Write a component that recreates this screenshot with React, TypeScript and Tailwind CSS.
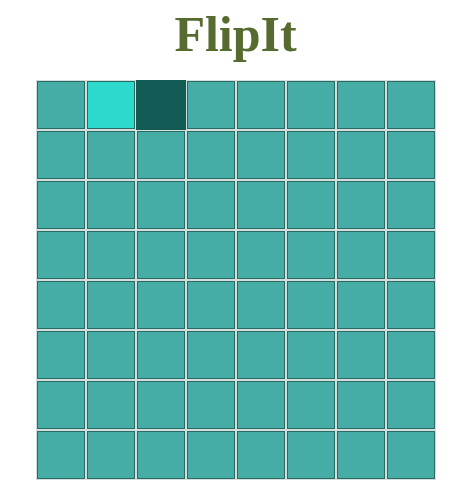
const SIZE = 8

const cellClass = (i: number) => {
  if (i === 1) return 'w-[48px] h-[48px] m-px border border-[#2a6b64] bg-[#2dd9cc] shadow-[0_0_0_1px_#d3dedd]'
  if (i === 2) return 'w-[50px] h-[50px] bg-[#135c55]'
  return 'w-[48px] h-[48px] m-px border border-[#2a6b64] bg-[#45ada5] shadow-[0_0_0_1px_#d3dedd]'
}

const App = () => {
  const cells = Array.from({ length: SIZE * SIZE }, (_, i) => i)

  return (
    <div className="w-[471px] h-[497px] bg-white flex flex-col items-center">
      <h1 className="mt-[4px] text-[50px] leading-[60px] font-bold text-[#556b2f] font-['Liberation_Serif',serif]">
        FlipIt
      </h1>
      <div className="mt-[16px] grid grid-cols-[repeat(8,50px)] ml-[1px]">
        {cells.map((i) => (
          <div key={i} className={cellClass(i)} />
        ))}
      </div>
    </div>
  )
}

export default App
